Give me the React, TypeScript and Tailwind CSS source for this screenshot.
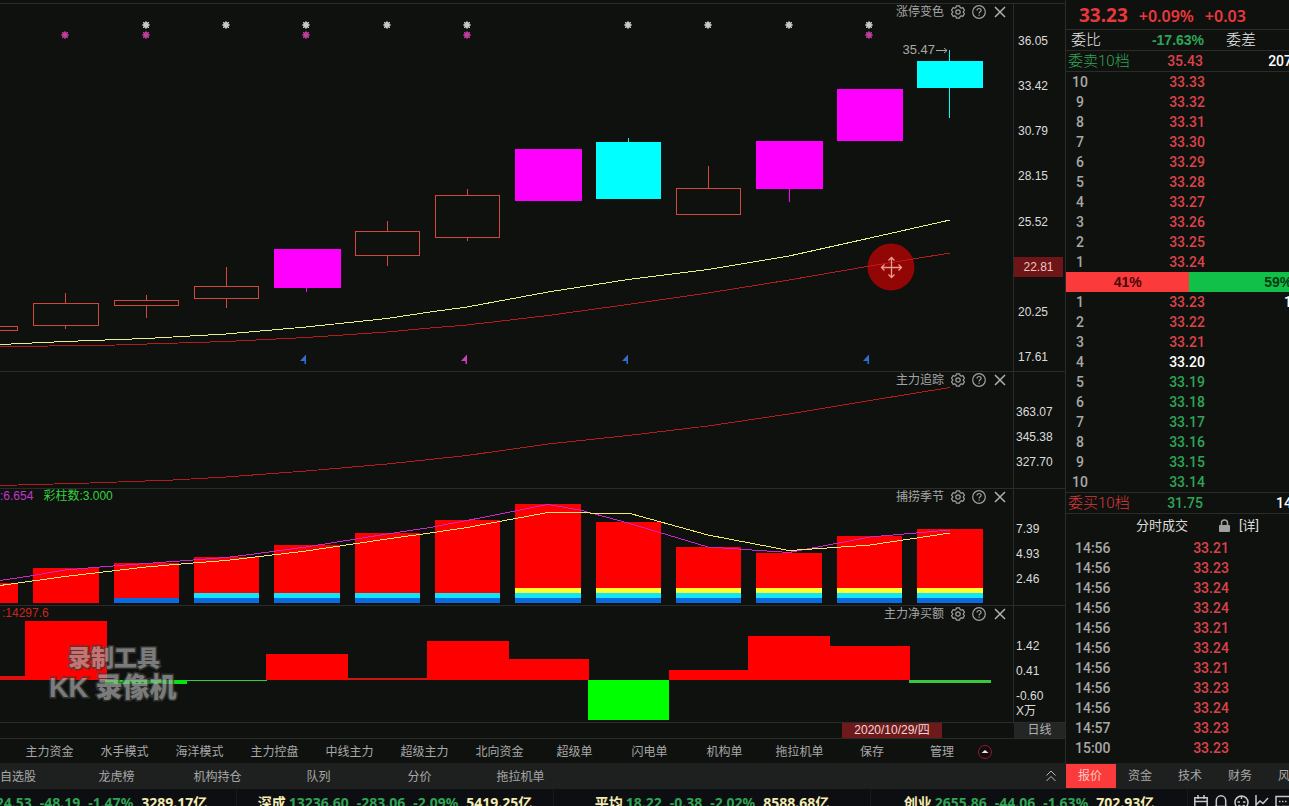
import React, { useState } from 'react';

const NUM_FONT = "font-['Liberation_Sans','Noto_Sans_CJK_SC',sans-serif]";
const QUOTE_FONT = "font-['Roboto','Noto_Sans_CJK_SC',sans-serif]";
const HEAD_FONT = "font-['Noto_Sans','Noto_Sans_CJK_SC',sans-serif]";

type CandleKind = 'up' | 'limit' | 'down';

interface Candle {
  x: number;
  w: number;
  top: number;
  bottom: number;
  mid: number;
  high: number;
  low: number;
  kind: CandleKind;
}

const CANDLES: Candle[] = [
  { x: -40, w: 58, top: 326, bottom: 331, mid: -10, high: 326, low: 331, kind: 'up' },
  { x: 33, w: 66, top: 303, bottom: 326, mid: 65, high: 293, low: 329, kind: 'up' },
  { x: 114, w: 65, top: 300, bottom: 306, mid: 146, high: 295, low: 318, kind: 'up' },
  { x: 194, w: 65, top: 286, bottom: 299, mid: 226, high: 267, low: 308, kind: 'up' },
  { x: 274, w: 67, top: 249, bottom: 288, mid: 306, high: 249, low: 292, kind: 'limit' },
  { x: 355, w: 65, top: 231, bottom: 256, mid: 387, high: 221, low: 266, kind: 'up' },
  { x: 435, w: 65, top: 195, bottom: 238, mid: 467, high: 189, low: 241, kind: 'up' },
  { x: 515, w: 67, top: 149, bottom: 201, mid: 548, high: 149, low: 201, kind: 'limit' },
  { x: 596, w: 65, top: 142, bottom: 199, mid: 628, high: 138, low: 199, kind: 'down' },
  { x: 676, w: 65, top: 188, bottom: 215, mid: 708, high: 166, low: 188, kind: 'up' },
  { x: 756, w: 67, top: 141, bottom: 189, mid: 789, high: 141, low: 202, kind: 'limit' },
  { x: 837, w: 66, top: 89, bottom: 141, mid: 870, high: 89, low: 141, kind: 'limit' },
  { x: 917, w: 66, top: 61, bottom: 88, mid: 949, high: 50, low: 118, kind: 'down' },
];

const CANDLE_COLORS: Record<CandleKind, string> = {
  up: '#d0483e',
  limit: '#ff00ff',
  down: '#00ffff',
};

const WHITE_STARS = [146, 226, 306, 387, 467, 628, 708, 789, 869];
const PINK_STARS = [65, 146, 306, 467, 869];
const FLAGS = [
  { x: 306, color: '#2f6fd0' },
  { x: 467, color: '#d23cc0' },
  { x: 628, color: '#2f6fd0' },
  { x: 869, color: '#2f6fd0' },
];

const SEASON_BARS = [
  { x: -47, w: 65, top: 583, bands: 0 },
  { x: 33, w: 66, top: 568, bands: 0 },
  { x: 114, w: 65, top: 563, bands: 1 },
  { x: 194, w: 65, top: 557, bands: 2 },
  { x: 274, w: 66, top: 545, bands: 2 },
  { x: 355, w: 65, top: 533, bands: 2 },
  { x: 435, w: 65, top: 520, bands: 2 },
  { x: 515, w: 66, top: 504, bands: 3 },
  { x: 596, w: 65, top: 522, bands: 3 },
  { x: 676, w: 65, top: 547, bands: 3 },
  { x: 756, w: 66, top: 553, bands: 3 },
  { x: 837, w: 65, top: 536, bands: 3 },
  { x: 917, w: 66, top: 529, bands: 3 },
];

const BAND_COLORS = ['#0a6be0', '#12e6f6', '#ffff2e'];

const FLOW_BARS = [
  { x: 0, w: 25, y: 676, h: 4, color: '#e01010' },
  { x: 25, w: 82, y: 621, h: 59, color: '#ff0000' },
  { x: 105, w: 82, y: 680, h: 4, color: '#08e018' },
  { x: 187, w: 80, y: 680, h: 1, color: '#30d040' },
  { x: 266, w: 82, y: 654, h: 26, color: '#ff0000' },
  { x: 348, w: 79, y: 678, h: 2, color: '#d01414' },
  { x: 427, w: 82, y: 641, h: 39, color: '#ff0000' },
  { x: 509, w: 80, y: 659, h: 21, color: '#ff0000' },
  { x: 588, w: 81, y: 680, h: 40, color: '#00ff00' },
  { x: 669, w: 79, y: 670, h: 10, color: '#ff0000' },
  { x: 748, w: 82, y: 636, h: 44, color: '#ff0000' },
  { x: 830, w: 80, y: 646, h: 34, color: '#ff0000' },
  { x: 909, w: 82, y: 680, h: 3, color: '#3cc83c' },
];

const PRICE_AXIS = ['36.05', '33.42', '30.79', '28.15', '25.52', '22.81', '20.25', '17.61'];

const ASKS = [
  ['10', '33.33'],
  ['9', '33.32'],
  ['8', '33.31'],
  ['7', '33.30'],
  ['6', '33.29'],
  ['5', '33.28'],
  ['4', '33.27'],
  ['3', '33.26'],
  ['2', '33.25'],
  ['1', '33.24'],
];

const BIDS = [
  ['1', '33.23', '1'],
  ['2', '33.22', ''],
  ['3', '33.21', ''],
  ['4', '33.20', ''],
  ['5', '33.19', ''],
  ['6', '33.18', ''],
  ['7', '33.17', ''],
  ['8', '33.16', ''],
  ['9', '33.15', ''],
  ['10', '33.14', ''],
];

const PREV_CLOSE = 33.2;

const TICKS = [
  ['14:56', '33.21'],
  ['14:56', '33.23'],
  ['14:56', '33.24'],
  ['14:56', '33.24'],
  ['14:56', '33.21'],
  ['14:56', '33.24'],
  ['14:56', '33.21'],
  ['14:56', '33.23'],
  ['14:56', '33.24'],
  ['14:57', '33.23'],
  ['15:00', '33.23'],
];

const MODES = [
  '主力资金', '水手模式', '海洋模式', '主力控盘', '中线主力', '超级主力',
  '北向资金', '超级单', '闪电单', '机构单', '拖拉机单',
];

const INDEXES = [
  { name: '上证', price: '3224.53', diff: '-48.19', pct: '-1.47%', amount: '3289.17亿' },
  { name: '深成', price: '13236.60', diff: '-283.06', pct: '-2.09%', amount: '5419.25亿' },
  { name: '平均', price: '18.22', diff: '-0.38', pct: '-2.02%', amount: '8588.68亿' },
  { name: '创业', price: '2655.86', diff: '-44.06', pct: '-1.63%', amount: '702.93亿' },
];

const priceColor = (price: string) => {
  const value = Number(price);
  if (value > PREV_CLOSE) return 'text-[#dc4348]';
  if (value < PREV_CLOSE) return 'text-[#2fa456]';
  return 'text-white';
};

const GearIcon = () => (
  <svg width="14" height="14" viewBox="0 0 14 14" fill="none" stroke="#a0a0a0" strokeWidth="1.2" strokeLinejoin="round">
    <path d="M5.4 .8h3.2l.5 1.7 1.2.7 1.7-.5 1.5 2.7L12.3 6.600v.8l1.200 1.200-1.500 2.700-1.700-.5-1.200.7-.5 1.700H5.400l-.5-1.700-1.200-.7-1.700.5L.5 8.600l1.200-1.200v-.8L.5 5.400 2 2.700l1.700.5 1.200-.7z" />
    <circle cx="7" cy="7" r="2.2" />
  </svg>
);

const HelpIcon = () => (
  <svg width="14" height="14" viewBox="0 0 14 14" fill="none" stroke="#a0a0a0" strokeWidth="1.2">
    <circle cx="7" cy="7" r="6.3" />
    <path d="M5 5.600c0-1.300.9-2.100 2.100-2.100s2 .8 2 1.900c0 1.400-2 1.500-2 3" />
    <path d="M7.100 9.400v1.300" />
  </svg>
);

const CloseIcon = () => (
  <svg width="14" height="14" viewBox="0 0 14 14" stroke="#b0b0b0" strokeWidth="1.5">
    <path d="M2 2l10 10M12 2L2 12" />
  </svg>
);

const PaneTools = ({ title }: { title: string }) => (
  <div className="absolute top-0 right-[6px] flex h-4 items-center gap-[7px] text-xs text-[#a4a4a4]">
    <span>{title}</span>
    <button type="button" aria-label={`${title} 设置`}><GearIcon /></button>
    <button type="button" aria-label={`${title} 帮助`}><HelpIcon /></button>
    <button type="button" aria-label={`${title} 关闭`}><CloseIcon /></button>
  </div>
);

interface PaneProps {
  title: string;
  top: number;
  height: number;
  axis: React.ReactNode;
  overlay?: React.ReactNode;
  children: React.ReactNode;
}

const Pane = ({ title, top, height, axis, overlay, children }: PaneProps) => (
  <section className="flex border-t border-[#2a2c2a]">
    <div className="relative min-w-0 flex-1">
      <svg
        className="block w-full"
        height={height}
        viewBox={`0 ${top} 1013 ${height}`}
        preserveAspectRatio="none"
        fill="none"
        shapeRendering="crispEdges"
      >
        {children}
      </svg>
      {overlay}
      <PaneTools title={title} />
    </div>
    <div className="w-[52px] shrink-0 border-l border-[#2a2c2a] text-xs text-[#dcdcdc]">{axis}</div>
  </section>
);

const SmallAxis = ({ values, unit }: { values: string[]; unit?: string }) => (
  <ul className="pt-[33px] pl-[2px] leading-[15px]">
    {values.map((v) => (
      <li key={v} className={unit && v === values[values.length - 1] ? 'h-[15px]' : 'h-[25px]'}>{v}</li>
    ))}
    {unit && <li className="h-[15px]">{unit}</li>}
  </ul>
);

const Star = ({ x, y, color }: { x: number; y: number; color: string }) => (
  <g stroke={color} strokeWidth="1" shapeRendering="auto">
    <circle cx={x} cy={y} r="2.9" fill={color} stroke="none" />
    <path d={`M${x - 4} ${y}h8M${x} ${y - 4}v8M${x - 3} ${y - 3}l6 6M${x + 3} ${y - 3}l-6 6`} />
  </g>
);

const PriceChart = () => (
  <>
    {CANDLES.map((c) => {
      const color = CANDLE_COLORS[c.kind];
      return (
        <g key={c.x}>
          {c.high < c.top && <rect x={c.mid} y={c.high} width="1" height={c.top - c.high} fill={color} />}
          {c.low > c.bottom && <rect x={c.mid} y={c.bottom} width="1" height={c.low - c.bottom} fill={color} />}
          {c.kind === 'up' ? (
            <rect x={c.x + 0.5} y={c.top + 0.5} width={c.w - 1} height={c.bottom - c.top - 1} stroke={color} />
          ) : (
            <rect x={c.x} y={c.top} width={c.w} height={c.bottom - c.top} fill={color} />
          )}
        </g>
      );
    })}
    {WHITE_STARS.map((x) => <Star key={x} x={x} y={25} color="#c8c8c8" />)}
    {PINK_STARS.map((x) => <Star key={x} x={x} y={35} color="#c03c9c" />)}
    {FLAGS.map((f) => (
      <path key={f.x} d={`M${f.x} 354.500v9.500h-1.500v-3H${f.x - 6}z`} fill={f.color} shapeRendering="auto" />
    ))}
    <circle cx="891" cy="267" r="23.5" fill="#920606" shapeRendering="auto" />
    <polyline
      stroke="#e6f08c"
      points="0,344.5 65,341.5 146,338.5 226,334 306,327 387,318.5 430,312 467,307 548,292 628,279.5 708,269.5 789,256 870,238 950,220"
    />
    <polyline
      stroke="#b41c20"
      points="0,346.5 100,345.5 226,341.5 306,337.5 387,332 430,328 467,325 548,315.5 628,304.5 708,293 789,280 870,266 950,253"
    />
    <path
      d="M891.500 258v19M882 267.500h19M888.500 260.500l3-3 3 3M888.500 274.500l3 3 3-3M884.500 264.500l-3 3 3 3M898.500 264.500l3 3-3 3"
      stroke="#f09a90"
      strokeWidth="1.3"
      shapeRendering="auto"
    />
  </>
);

const SeasonChart = () => (
  <>
    {SEASON_BARS.map((b) => (
      <g key={b.x}>
        <rect x={b.x} y={b.top} width={b.w} height={603 - b.top} fill="#ff0000" />
        {BAND_COLORS.slice(0, b.bands).map((color, i) => (
          <rect key={color} x={b.x} y={598 - i * 5} width={b.w} height="5" fill={color} />
        ))}
      </g>
    ))}
    <polyline
      stroke="#c828c8"
      points="0,580.5 30,576 65,570 100,567 146,563.5 187,560.5 226,557.5 250,554.5 306,547 387,534 430,527.5 467,520.5 548,504.5 580,510 628,523 708,547 789,552.5 870,537 950,530"
    />
    <polyline
      stroke="#f4e870"
      points="0,585.5 65,576.5 146,567 187,563.5 226,560.5 306,551 387,539 430,533 467,527.5 548,512.5 630,513.5 708,535 789,550.5 820,548.5 870,545 950,533"
    />
  </>
);

const Watermark = () => (
  <div className="absolute top-[38px] left-[49px] font-black text-[#a8a8a8] opacity-70 [paint-order:stroke_fill] [-webkit-text-stroke:3px_#3c3e3c]">
    <div className="pl-[19px] text-[23px] leading-[28px]">录制工具</div>
    <div className="text-[27px] leading-[32px]">KK 录像机</div>
  </div>
);

const ChartArea = () => (
  <div className={`min-w-0 flex-1 pt-[3px] ${NUM_FONT}`}>
    <Pane
      title="涨停变色"
      top={4}
      height={367}
      overlay={
        <div className="absolute top-[37px] right-[65px] flex items-center text-[13px] leading-[18px] text-[#a8a8a8]">
          35.47
          <svg width="13" height="9" viewBox="0 0 13 9" fill="none" stroke="#a8a8a8">
            <path d="M1 4.500h11M9 2l3 2.500-3 2.500" />
          </svg>
        </div>
      }
      axis={
        <ul className="flex h-full flex-col justify-between pt-[27px] pb-1">
          {PRICE_AXIS.map((v) => (
            <li
              key={v}
              className={
                v === '22.81'
                  ? 'mr-[2px] h-5 bg-[#6e1518] text-center leading-5 text-[#eec4c0]'
                  : 'h-5 pl-1 leading-5'
              }
            >
              {v}
            </li>
          ))}
        </ul>
      }
    >
      <PriceChart />
    </Pane>

    <Pane title="主力追踪" top={372} height={116} axis={<SmallAxis values={['363.07', '345.38', '327.70']} />}>
      <polyline
        stroke="#b41c20"
        points="0,485.5 90,483 173,480 226,477 306,471 387,464 467,455.5 548,444 628,435.5 708,426 789,414 870,400.5 950,387.5"
      />
    </Pane>

    <Pane
      title="捕捞季节"
      top={489}
      height={116}
      axis={<SmallAxis values={['7.39', '4.93', '2.46']} />}
      overlay={
        <div className="absolute top-0 left-0 flex gap-[10px] text-xs leading-[15px]">
          <span className="text-[#c038c8]">:6.654</span>
          <span className="text-[#34d23c]">彩柱数:3.000</span>
        </div>
      }
    >
      <SeasonChart />
    </Pane>

    <Pane
      title="主力净买额"
      top={606}
      height={116}
      axis={<SmallAxis values={['1.42', '0.41', '-0.60']} unit="X万" />}
      overlay={
        <>
          <div className="absolute top-0 left-[2px] text-xs leading-[15px] text-[#c4281c]">:14297.6</div>
          <Watermark />
        </>
      }
    >
      {FLOW_BARS.map((b) => (
        <rect key={b.x} x={b.x} y={b.y} width={b.w} height={b.h} fill={b.color} />
      ))}
    </Pane>

    <div className="flex h-4 border-t border-[#2a2c2a] text-xs leading-[15px]">
      <div className="flex flex-1 justify-end pr-[72px]">
        <time className="w-[100px] bg-[#6e1a1c] text-center text-[#f0d8d4]">2020/10/29/四</time>
      </div>
      <button type="button" className="w-[51px] bg-[#242625] text-[#b0b0b0]">日线</button>
    </div>

    <div className="flex h-[25px] items-center overflow-hidden border-t border-[#2a2c2a] pt-[2px] pl-3 text-xs text-[#a8a8a8]">
      {MODES.map((m) => (
        <button key={m} type="button" className="w-[75px] shrink-0">{m}</button>
      ))}
      <button type="button" className="w-[70px] shrink-0">保存</button>
      <button type="button" className="w-[70px] shrink-0">管理</button>
      <button type="button" aria-label="展开" className="shrink-0">
        <svg width="16" height="16" viewBox="0 0 16 16">
          <circle cx="8" cy="8" r="6.500" fill="#140a0e" stroke="#8c1c30" />
          <path d="M4.500 9h7L8 6z" fill="#e8e8e8" />
        </svg>
      </button>
    </div>
  </div>
);

interface TotalRowProps {
  label: string;
  price: string;
  volume: string;
  labelClass: string;
  priceClass: string;
}

const TotalRow = ({ label, price, volume, labelClass, priceClass }: TotalRowProps) => (
  <tr className="h-[21px]">
    <th className={`border-b border-[#2a2c2a] pl-[2px] text-left text-[15px] leading-5 font-light whitespace-nowrap ${labelClass}`}>{label}</th>
    <td className={`border-b border-[#2a2c2a] pr-1 text-center ${priceClass}`}>{price}</td>
    <td className="border-b border-[#2a2c2a] pr-[75px] text-right text-white">{volume}</td>
  </tr>
);

const QuoteRow = ({ level, price, volume }: { level: string; price: string; volume?: string }) => (
  <tr className="h-5">
    <th className="font-medium text-[#a8a8a8]"><span className="block w-7 text-center">{level}</span></th>
    <td className={`text-center ${priceColor(price)}`}>{price}</td>
    <td className="pr-[75px] text-right text-white">{volume}</td>
  </tr>
);

const bookTable = 'w-full table-fixed border-separate border-spacing-0 text-sm leading-5 font-medium';

const BookCols = () => (
  <colgroup>
    <col className="w-16" />
    <col className="w-[114px]" />
    <col />
  </colgroup>
);

const QuotePanel = () => (
  <aside className={`w-[224px] shrink-0 overflow-hidden border-l border-[#2a2c2a] ${QUOTE_FONT}`}>
    {/* 盘口宽于窗口，右侧裁掉 */}
    <div className="w-[301px]">
      <div className={`flex h-[30px] items-center gap-[11px] border-b border-[#2a2c2a] pt-[2px] pl-[13px] text-base font-semibold text-[#e8383c] ${HEAD_FONT}`}>
        <strong className="text-[19px] font-bold">33.23</strong>
        <span>+0.09%</span>
        <span>+0.03</span>
      </div>
      <div className="flex h-[21px] items-center border-b border-[#2a2c2a] text-[15px] leading-5 font-light text-[#e8e8e8]">
        <span className="w-16 pl-[5px]">委比</span>
        <span className={`w-24 text-center text-sm font-bold text-[#2fa456] ${NUM_FONT}`}>-17.63%</span>
        <span>委差</span>
      </div>

      <table className={bookTable}>
        <BookCols />
        <tbody>
          <TotalRow label="委卖10档" price="35.43" volume="207" labelClass="text-[#2fa456]" priceClass="text-[#dc4348]" />
          {ASKS.map(([level, price]) => <QuoteRow key={level} level={level} price={price} />)}
        </tbody>
      </table>

      <div className={`flex h-5 text-center text-sm leading-5 font-bold ${NUM_FONT}`}>
        <div className="w-[41%] bg-[#fb3b3b] text-[#4a0606]">41%</div>
        <div className="flex-1 bg-[#10c048] text-[#063c14]">59%</div>
      </div>

      <table className={bookTable}>
        <BookCols />
        <tbody>
          {BIDS.map(([level, price, volume]) => (
            <QuoteRow key={level} level={level} price={price} volume={volume} />
          ))}
        </tbody>
      </table>
      <table className={`${bookTable} border-t border-[#2a2c2a]`}>
        <BookCols />
        <tbody>
          <TotalRow label="委买10档" price="31.75" volume="14" labelClass="text-[#d8383c]" priceClass="text-[#2fa456]" />
        </tbody>
      </table>

      <div className="flex h-6 items-center pl-[70px] text-[13px] text-[#dcdcdc]">
        <h2 className="w-[83px]">分时成交</h2>
        <svg width="11" height="14" viewBox="0 0 11 14" fill="none">
          <path d="M2.500 6V4a3 3 0 016 0v2" stroke="#a0a0a0" strokeWidth="1.500" />
          <rect y="6" width="11" height="7" rx="1" fill="#a0a0a0" />
        </svg>
        <a href="#detail" className="pl-[9px]">[详]</a>
      </div>

      <table className={bookTable}>
        <colgroup>
          <col className="w-16" />
          <col className="w-[162px]" />
          <col />
        </colgroup>
        <tbody>
          {TICKS.map(([time, price], i) => (
            <tr key={i} className="h-5">
              <td className="pl-[9px] text-[#a8a8a8]">{time}</td>
              <td className="text-center text-[#dc4348]">{price}</td>
              <td />
            </tr>
          ))}
        </tbody>
      </table>
    </div>
  </aside>
);

const TabBar = () => {
  const [active, setActive] = useState('报价');
  return (
    <nav className="flex h-[26px] shrink-0 items-center bg-[#1e201f] text-xs text-[#a8a8a8]">
      <div className="flex min-w-0 flex-1 items-center overflow-hidden pt-[2px]">
        <button type="button" className="w-[66px] shrink-0 text-left">自选股</button>
        {['龙虎榜', '机构持仓', '队列', '分价', '拖拉机单'].map((t) => (
          <button key={t} type="button" className="w-[101px] shrink-0">{t}</button>
        ))}
      </div>
      <button type="button" aria-label="收起" className="px-[10px]">
        <svg width="10" height="12" viewBox="0 0 10 12" fill="none" stroke="#b8b8b8">
          <path d="M.5 5.500L5 1l4.500 4.500M.5 11L5 6.500 9.500 11" />
        </svg>
      </button>
      <div className="w-[223px] shrink-0 overflow-hidden">
        <div className="flex w-[301px]">
          {['报价', '资金', '技术', '财务', '风'].map((t) => (
            <button
              key={t}
              type="button"
              onClick={() => setActive(t)}
              className={`h-6 w-[50px] px-3 text-left ${active === t ? 'bg-[#fb3b3b] text-[#ffc8c0]' : ''}`}
            >
              {t}
            </button>
          ))}
        </div>
      </div>
    </nav>
  );
};

const TickerIcons = () => (
  <div className="flex w-[101px] shrink-0 items-center justify-between pl-[6px] text-[#c8c8c8]">
    <svg width="14" height="15" viewBox="0 0 14 15" fill="none" stroke="currentColor" strokeWidth="1.500">
      <path d="M.8 2.800h12.400v11H.8zM.8 6.500h12.400M4 0v4M10 0v4" />
    </svg>
    <svg width="14" height="15" viewBox="0 0 14 15" fill="none" stroke="currentColor" strokeWidth="1.500">
      <path d="M2.300 11V5.500a4.700 4.700 0 019.400 0V11M.5 11.500h13M5.500 14h3" />
    </svg>
    <svg width="15" height="15" viewBox="0 0 15 15" fill="none" stroke="currentColor" strokeWidth="1.500">
      <circle cx="7.500" cy="7.500" r="6.500" />
      <path d="M7.500 1v3M3.500 7h2.500M9 7h2.500M4.500 10c1.500 2 4.500 2 6 0" />
    </svg>
    <svg width="14" height="15" viewBox="0 0 14 15" fill="none" stroke="currentColor" strokeWidth="1.500">
      <path d="M1 0v14h13M1 10l4-4 3 2.500L13 3" />
    </svg>
    <svg width="14" height="15" viewBox="0 0 14 15" fill="none" stroke="currentColor" strokeWidth="1.500">
      <path d="M14 1.500H1v10h3v3l3-3h7M4 6.500h1.500M7 6.500h1.500M10 6.500h1.500" />
    </svg>
  </div>
);

const Ticker = () => (
  <footer className={`flex h-[27px] shrink-0 justify-end overflow-hidden bg-[#0d0e11] text-sm font-bold ${HEAD_FONT}`}>
    {INDEXES.map((idx) => (
      <div key={idx.name} className="flex w-[317px] shrink-0 items-center justify-center border-r border-[#191a1f] whitespace-nowrap text-[#2fa456]">
        <span className="pr-[3px] text-[#f4ecb4]">{idx.name}</span>
        <span className="pr-2">{idx.price}</span>
        <span className="pr-2">{idx.diff}</span>
        <span className="pr-2">{idx.pct}</span>
        <span className="text-[#f4ecb4]">{idx.amount}</span>
      </div>
    ))}
    <TickerIcons />
  </footer>
);

export default function App() {
  return (
    <div className="flex h-screen flex-col overflow-hidden bg-[#0f110f]">
      <main className="flex shrink-0">
        <ChartArea />
        <QuotePanel />
      </main>
      <div className={NUM_FONT}>
        <TabBar />
      </div>
      <Ticker />
    </div>
  );
}
